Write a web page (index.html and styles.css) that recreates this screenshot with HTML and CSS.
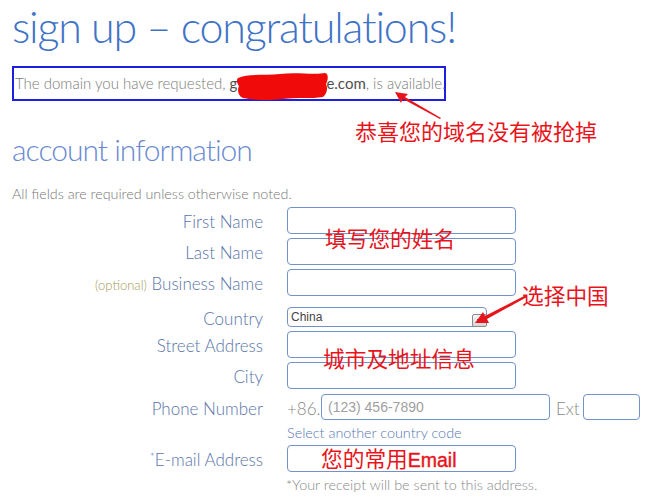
FILE: index.html
```html
<!DOCTYPE html>
<html lang="en">
<head>
<meta charset="utf-8">
<title>sign up - congratulations!</title>
<link rel="stylesheet" href="styles.css">
</head>
<body>
<div class="page">
  <h1 class="title">sign up – congratulations!</h1>
  <div class="domain-box">
    <p class="domain-text">The domain you have requested, <span class="dom">g<span class="hidden-part"></span>e.com</span>, is available.</p>
  </div>
  <h2 class="section">account information</h2>
  <p class="note">All fields are required unless otherwise noted.</p>

  <div class="form">
    <div class="row">
      <label class="label">First Name</label>
      <div class="field"><span class="input"></span></div>
    </div>
    <div class="row">
      <label class="label">Last Name</label>
      <div class="field"><span class="input"></span></div>
    </div>
    <div class="row">
      <label class="label"><span class="optional">(optional)</span> Business Name</label>
      <div class="field"><span class="input"></span></div>
    </div>
    <div class="row row-select">
      <label class="label">Country</label>
      <div class="field">
        <span class="select"><span class="select-value">China</span><span class="select-btn"><span class="tri"></span></span></span>
      </div>
    </div>
    <div class="row">
      <label class="label">Street Address</label>
      <div class="field"><span class="input"></span></div>
    </div>
    <div class="row">
      <label class="label">City</label>
      <div class="field"><span class="input"></span></div>
    </div>
    <div class="row row-phone">
      <label class="label">Phone Number</label>
      <div class="field phone">
        <span class="prefix">+86.</span>
        <span class="input phone-input"><span class="placeholder">(123) 456-7890</span></span>
        <span class="ext-label">Ext</span>
        <span class="input ext-input"></span>
      </div>
    </div>
    <div class="row row-help">
      <span class="label"></span>
      <a class="help-link">Select another country code</a>
    </div>
    <div class="row">
      <label class="label"><span class="star">*</span>E-mail Address</label>
      <div class="field"><span class="input"></span></div>
    </div>
    <div class="row row-help">
      <span class="label"></span>
      <span class="receipt">*Your receipt will be sent to this address.</span>
    </div>
  </div>

  <!-- annotation overlays -->
  <svg class="scribble" width="100" height="32" viewBox="0 0 100 32">
    <path d="M3 8 C 12 3, 30 6, 45 4 C 60 2, 80 5, 90 3 C 94 4, 93 10, 91 14 C 93 18, 92 24, 88 27 C 76 29, 62 27, 48 29 C 32 31, 18 30, 8 28 C 3 26, 2 20, 4 16 C 2 13, 1 10, 3 8 Z" fill="#f00a0a"/>
  </svg>
  <svg class="arrow arrow1" width="60" height="40" viewBox="0 0 60 40">
    <polygon points="1,1 14,3 11,6 47,27 46,28 9,8 7,12" fill="#e8141c"/>
  </svg>
  <svg class="arrow arrow2" width="56" height="34" viewBox="0 0 56 34">
    <polygon points="1,31 9,20 11,24 52,3 53,5 13,27 15,31" fill="#e8141c"/>
  </svg>
  <span class="note-cn cn1">恭喜您的域名没有被抢掉</span>
  <span class="note-cn cn2">填写您的姓名</span>
  <span class="note-cn cn3">选择中国</span>
  <span class="note-cn cn4">城市及地址信息</span>
  <span class="note-cn cn5">您的常用<span class="latin">Email</span></span>
</div>
</body>
</html>
```
FILE: styles.css
```css
html, body {
  margin: 0;
  padding: 0;
  background: #ffffff;
}

.page {
  position: relative;
  width: 663px;
  height: 500px;
  overflow: hidden;
  font-family: "Lato", "Open Sans", sans-serif;
}

.title {
  margin: 0;
  padding-left: 12px;
  height: 54px;
  font-family: "Lato", sans-serif;
  font-weight: 300;
  font-size: 43px;
  letter-spacing: -1.2px;
  line-height: 54px;
  color: #3f73c6;
  white-space: nowrap;
}

.domain-box {
  margin: 12px 0 0 12px;
  width: 430px;
  height: 31px;
  border: 2px solid #1c1ee0;
}

.domain-text {
  margin: 0;
  padding-left: 1px;
  font-size: 15px;
  font-weight: 300;
  line-height: 31px;
  color: #7b7b7b;
  white-space: nowrap;
}

.dom {
  color: #4f4f4f;
  font-weight: 400;
}

.hidden-part {
  display: inline-block;
  width: 89px;
}

.section {
  margin: 28px 0 0 0;
  padding-left: 12px;
  height: 40px;
  font-family: "Lato", sans-serif;
  font-weight: 300;
  font-size: 30px;
  letter-spacing: -1px;
  line-height: 40px;
  color: #6a8ad2;
  white-space: nowrap;
}

.note {
  margin: 16px 0 0 12px;
  font-size: 14.3px;
  font-weight: 300;
  line-height: 18px;
  color: #777777;
}

.form {
  margin-top: 4px;
  display: flex;
  flex-direction: column;
  gap: 4px;
}

.row {
  display: flex;
  align-items: center;
  height: 27px;
}

.label {
  width: 287px;
  padding-right: 24px;
  padding-top: 2px;
  box-sizing: border-box;
  flex-shrink: 0;
  text-align: right;
  font-size: 17px;
  font-weight: 300;
  color: #5874a9;
  white-space: nowrap;
}

.optional {
  font-size: 13px;
  color: #a59a55;
}

.star {
  font-size: 11px;
  vertical-align: 5px;
}

.field {
  display: flex;
  align-items: center;
}

.input {
  display: block;
  box-sizing: border-box;
  width: 229px;
  height: 27px;
  border: 1px solid #7393c8;
  border-radius: 4px;
  background: #ffffff;
}

.row-select {
  margin-top: 7px;
  height: 20px;
}

.select {
  position: relative;
  display: flex;
  align-items: center;
  box-sizing: border-box;
  width: 200px;
  height: 20px;
  border: 1px solid #7393c8;
  border-radius: 4px;
}

.select-value {
  padding-left: 3px;
  font-family: "Liberation Sans", Arial, sans-serif;
  font-size: 12px;
  color: #444444;
}

.select-btn {
  position: absolute;
  right: -1px;
  bottom: -1px;
  width: 15px;
  height: 13px;
  box-sizing: border-box;
  border: 1px solid #8a8a8a;
  border-radius: 2px;
  background: linear-gradient(#f4f4f4, #d6d6d6);
  display: flex;
  align-items: center;
  justify-content: center;
}

.tri {
  width: 0;
  height: 0;
  border-left: 3px solid transparent;
  border-right: 3px solid transparent;
  border-top: 4px solid #000000;
}

.row-phone {
  margin-top: 1px;
  height: 26px;
}

.phone .input {
  height: 26px;
}

.prefix {
  width: 34px;
  padding-top: 2px;
  font-size: 17px;
  font-weight: 300;
  color: #888888;
}

.phone-input {
  width: 229px;
  display: flex;
  align-items: center;
  padding-left: 6px;
}

.placeholder {
  font-family: "Liberation Sans", Arial, sans-serif;
  font-size: 14px;
  color: #a0a0a0;
}

.ext-label {
  margin-left: 6px;
  width: 27px;
  padding-top: 2px;
  font-size: 17px;
  font-weight: 300;
  color: #888888;
}

.ext-input {
  width: 57px;
}

.row-help {
  height: 18px;
  margin-top: -1px;
}

.help-link {
  font-size: 14.4px;
  font-weight: 300;
  color: #5677b3;
  white-space: nowrap;
}

.receipt {
  margin-left: -1px;
  font-size: 14.4px;
  font-weight: 300;
  color: #888888;
  white-space: nowrap;
}

/* annotations drawn over the screenshot */
.scribble {
  position: absolute;
  left: 235px;
  top: 70px;
}

.arrow {
  position: absolute;
}

.arrow1 {
  left: 394px;
  top: 91px;
}

.arrow2 {
  left: 474px;
  top: 292px;
}

.note-cn {
  position: absolute;
  font-family: "Noto Sans CJK SC", "Noto Sans", sans-serif;
  font-size: 21.7px;
  line-height: 22px;
  color: #e8141c;
  white-space: nowrap;
}

.cn1 {
  left: 355px;
  top: 119px;
  font-size: 22px;
}

.cn2 {
  left: 325px;
  top: 227px;
}

.cn3 {
  left: 522px;
  top: 284px;
}

.cn4 {
  left: 323px;
  top: 347px;
}

.cn5 {
  left: 321px;
  top: 447px;
}

.latin {
  font-family: "Liberation Sans", Arial, sans-serif;
  font-weight: 400;
  font-size: 19.5px;
  -webkit-text-stroke: 0.4px #e8141c;
}
```
